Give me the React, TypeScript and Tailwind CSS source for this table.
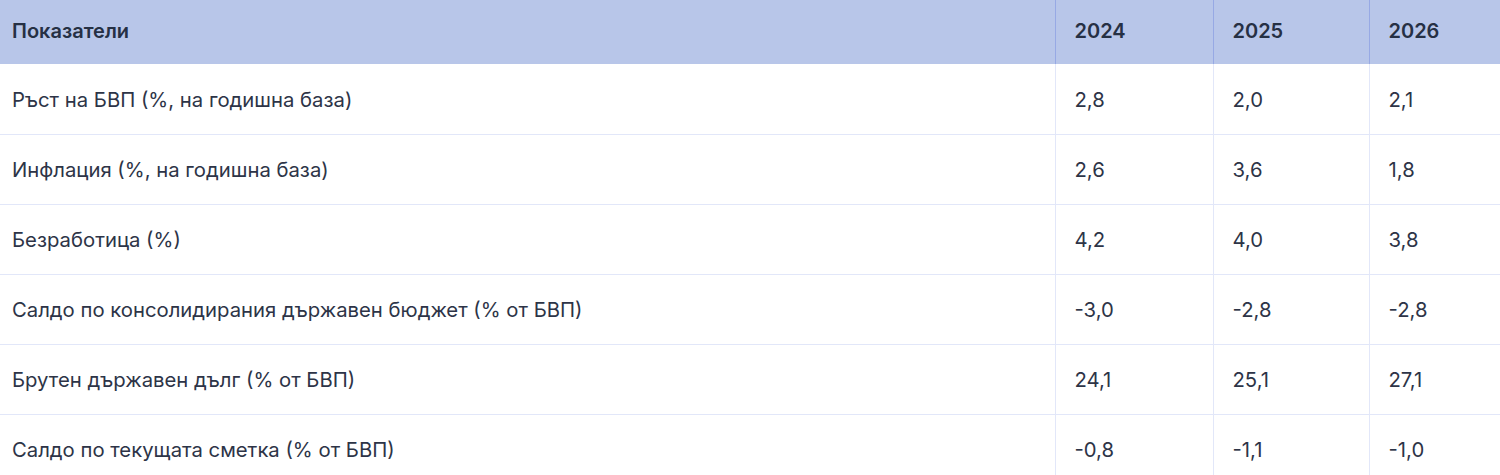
const rows = [
  { label: "Ръст на БВП (%, на годишна база)", values: ["2,8", "2,0", "2,1"] },
  { label: "Инфлация (%, на годишна база)", values: ["2,6", "3,6", "1,8"] },
  { label: "Безработица (%)", values: ["4,2", "4,0", "3,8"] },
  { label: "Салдо по консолидирания държавен бюджет (% от БВП)", values: ["-3,0", "-2,8", "-2,8"] },
  { label: "Брутен държавен дълг (% от БВП)", values: ["24,1", "25,1", "27,1"] },
  { label: "Салдо по текущата сметка (% от БВП)", values: ["-0,8", "-1,1", "-1,0"] },
];

const years = ["2024", "2025", "2026"];

export default function App() {
  return (
    <div className="w-[1500px] h-[475px] overflow-hidden bg-white font-['Inter',sans-serif] text-[20px] text-[#2d3447]">
      <table className="w-[1500px] table-fixed border-collapse">
        <colgroup>
          <col className="w-[1055px]" />
          <col className="w-[158px]" />
          <col className="w-[156px]" />
          <col />
        </colgroup>
        <thead>
          <tr className="h-[64px] bg-[#b8c6e9]">
            <th className="pl-[12px] pb-[2px] text-left font-semibold text-[#263044]">Показатели</th>
            {years.map((y) => (
              <th key={y} className="border-l border-[#97a9e4] pl-[19px] pb-[2px] text-left font-semibold text-[#263044]">
                {y}
              </th>
            ))}
          </tr>
        </thead>
        <tbody className="text-[20.3px]">
          {rows.map((r) => (
            <tr key={r.label} className="h-[70px] border-b border-[#e2e7f9]">
              <td className="pl-[12px] pt-[2px]">{r.label}</td>
              {r.values.map((v, i) => (
                <td key={i} className="border-l border-[#e2e7f9] pl-[19px] pt-[2px]">
                  {v}
                </td>
              ))}
            </tr>
          ))}
        </tbody>
      </table>
    </div>
  );
}
